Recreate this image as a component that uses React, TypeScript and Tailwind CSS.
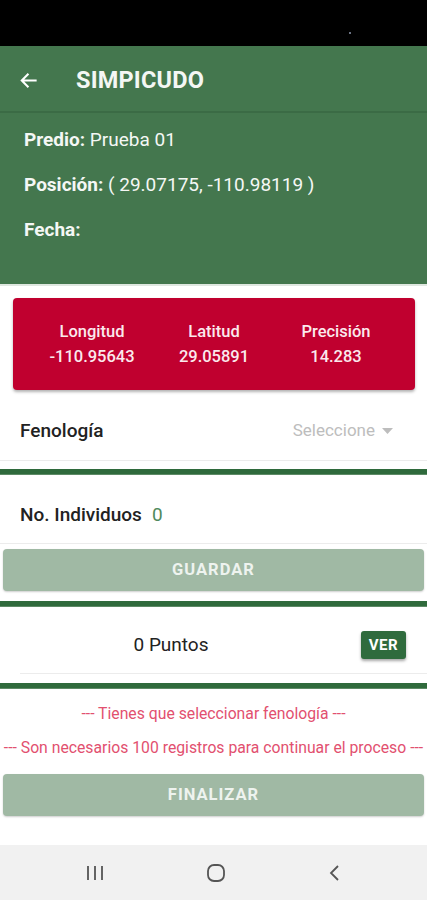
import React from 'react';

const font = { fontFamily: 'Roboto, "Noto Sans", sans-serif' };

function GreenBar() {
    return <div className="h-[6px] bg-[#2f6a3c] border-b border-[#5d8a66]" />;
}

export default function App() {
    return (
        <div className="w-[427px] h-[900px] bg-white flex flex-col overflow-hidden" style={font}>
            {/* status bar */}
            <div className="h-[46px] bg-black relative">
                <div className="absolute left-[349px] top-[32px] w-[2px] h-[2px] bg-gray-500" />
            </div>

            {/* header */}
            <div className="bg-[#44774e]">
                <div className="h-[67px] pt-[4px] flex items-center border-b-2 border-[#3b6b45]">
                    <svg className="ml-[19px]" width="19" height="19" viewBox="0 0 24 24" fill="none" stroke="white" strokeWidth="2.6" strokeLinecap="square">
                        <path d="M21 12H4M11 4.5L3.5 12l7.5 7.5" />
                    </svg>
                    <span className="ml-[38px] text-[23.5px] font-bold text-[#f4f7f4] tracking-[0.2px]">SIMPICUDO</span>
                </div>
                <div className="px-[24px] pt-[15px] pb-[43px] flex flex-col gap-[22px] text-[19px] text-[#f5f7f5] leading-[23px]">
                    <div><span className="font-bold">Predio:</span> Prueba 01</div>
                    <div><span className="font-bold">Posición:</span> ( 29.07175, -110.98119 )</div>
                    <div><span className="font-bold">Fecha:</span></div>
                </div>
            </div>
            <div className="h-[2px] bg-[#dfe7e0]" />

            {/* coords card */}
            <div className="pt-[12px] pl-[13px] pr-[12px]">
                <div className="h-[92px] bg-[#c0002f] rounded-[4px] shadow-[0_2px_3px_rgba(0,0,0,0.3)] grid grid-cols-3 items-center px-[18px] text-[#fbe9ed] text-[16.5px] leading-[25px] font-medium">
                    <div className="flex flex-col items-center"><span>Longitud</span><span>-110.95643</span></div>
                    <div className="flex flex-col items-center"><span>Latitud</span><span>29.05891</span></div>
                    <div className="flex flex-col items-center"><span>Precisión</span><span>14.283</span></div>
                </div>
            </div>

            {/* fenologia */}
            <div className="h-[71px] pt-[12px] flex items-center justify-between pl-[20px] pr-[34px] border-b border-[#ececec]">
                <span className="text-[19px] font-medium text-[#222]">Fenología</span>
                <span className="flex items-center gap-[7px] text-[17px] text-[#bdbdbd]">
                    Seleccione
                    <svg width="11" height="6" viewBox="0 0 11 6"><path d="M0 0h11L5.5 6z" fill="#bdbdbd" /></svg>
                </span>
            </div>
            <div className="h-[8px]" />
            <GreenBar />

            {/* individuos */}
            <div className="h-[69px] pt-[12px] flex items-center pl-[20px] border-b border-[#ececec]">
                <span className="text-[19px] font-medium text-[#222]">No. Individuos</span>
                <span className="ml-[10px] text-[19px] text-[#4f8a5c]">0</span>
            </div>
            <div className="px-[3px] pt-[5px]">
                <button className="w-full h-[42px] rounded-[4px] bg-[#a0b9a4] shadow-[0_1px_2px_rgba(0,0,0,0.2)] text-[16.5px] font-bold tracking-[1px] text-[#eef3ef]">GUARDAR</button>
            </div>
            <div className="h-[10px]" />
            <GreenBar />

            {/* puntos */}
            <div className="flex items-center h-[67px] pt-[10px] ml-[20px] border-b border-[#ececec]">
                <div className="w-[302px] text-center text-[19px] text-[#222]">0 Puntos</div>
                <button className="ml-[39px] w-[45px] h-[28px] rounded-[3px] bg-[#2f6b3d] shadow-[0_2px_3px_rgba(0,0,0,0.35)] text-[15px] font-bold text-white tracking-[0.5px]">VER</button>
            </div>
            <div className="h-[9px]" />
            <GreenBar />

            {/* messages */}
            <div className="flex flex-col items-center text-[15.75px] text-[#e2506f] pt-[15px] gap-[14px] leading-[20px]">
                <span>--- Tienes que seleccionar fenología ---</span>
                <span className="whitespace-nowrap">--- Son necesarios 100 registros para continuar el proceso ---</span>
            </div>
            <div className="px-[3px] pt-[16px]">
                <button className="w-full h-[42px] rounded-[4px] bg-[#a0b9a4] shadow-[0_1px_2px_rgba(0,0,0,0.2)] text-[16.5px] font-bold tracking-[1px] text-[#eef3ef]">FINALIZAR</button>
            </div>

            <div className="flex-1" />
            {/* nav bar */}
            <div className="h-[55px] bg-[#f1f1f1] flex items-center justify-around px-[34px]">
                <svg width="20" height="16" viewBox="0 0 20 16" fill="none" stroke="#555" strokeWidth="1.8">
                    <path d="M3 1v14M10 1v14M17 1v14" />
                </svg>
                <svg width="20" height="20" viewBox="0 0 20 20" fill="none" stroke="#555" strokeWidth="1.8">
                    <rect x="2" y="2" width="16" height="16" rx="6" />
                </svg>
                <svg width="14" height="18" viewBox="0 0 14 18" fill="none" stroke="#555" strokeWidth="1.8">
                    <path d="M10 2L3 9l7 7" />
                </svg>
            </div>
        </div>
    );
}
